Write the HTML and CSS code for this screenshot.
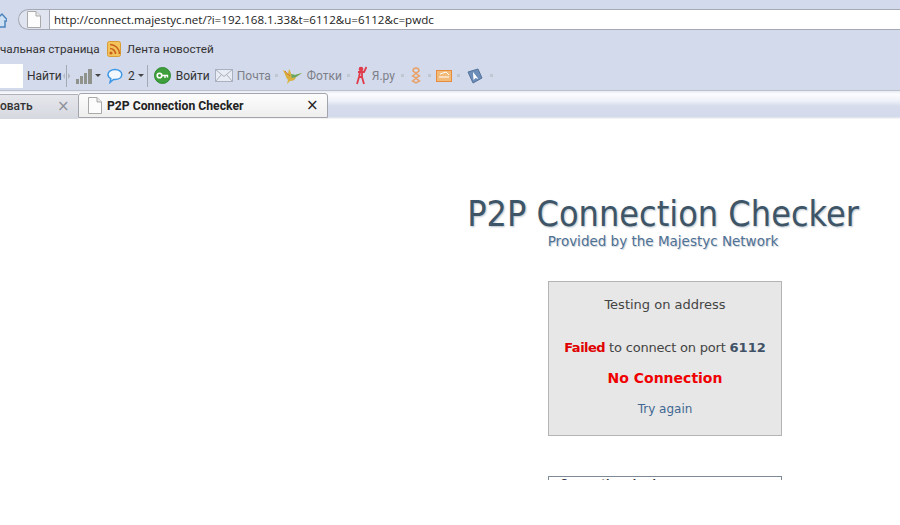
FILE: index.html
```html
<!DOCTYPE html>
<html lang="ru">
<head>
<meta charset="utf-8">
<title>P2P Connection Checker</title>
<link rel="stylesheet" href="styles.css">
</head>
<body>
<header class="chrome">
  <div class="addr-row">
    <svg class="home" width="7" height="16" viewBox="0 0 7 16"><path d="M-4 8 2 2l5 5.500V9H5v6H-2V9" fill="#cfe0f2" stroke="#4a84bd" stroke-width="1.500"/></svg>
    <div class="addr-pill">
      <svg width="14" height="17" viewBox="0 0 14 17"><path d="M.5.500h8.500l4.500 4.500v11.500H.5z" fill="#fcfcfc" stroke="#a9a9a9"/><path d="M9 .5v4.500h4.500" fill="#e8e8e8" stroke="#a9a9a9"/></svg>
    </div>
    <div class="addr-field">http://connect.majestyc.net/?i=192.168.1.33&amp;t=6112&amp;u=6112&amp;c=pwdc</div>
  </div>
  <div class="links-row">
    <span>чальная страница</span>
    <svg class="rss" width="14" height="16" viewBox="0 0 14 16"><rect x=".5" y=".5" width="13" height="15" rx="2" fill="#f3c35c" stroke="#d99b33"/><circle cx="4" cy="12" r="1.600" fill="#c8621c"/><path d="M3 7.500a5.500 5.500 0 0 1 5.500 5.500M3 3.500a9.500 9.500 0 0 1 9.500 9.500" fill="none" stroke="#c8621c" stroke-width="1.600"/></svg>
    <span>Лента новостей</span>
  </div>
  <div class="tools-row">
    <div class="search-box"></div>
    <span class="tool-text find">Найти</span>
    <svg class="grip" width="10" height="22" viewBox="0 0 10 22"><path d="M3.500 0v22" stroke="#a4a9b4"/><path d="M2 8 0 11l2 3zM5 8l2.500 3L5 14z" fill="#b5b9c2"/></svg>
    <svg class="signal" width="17" height="17" viewBox="0 0 17 17"><path d="M0 12h3v5H0zM4 9h3v8H4zM8 6h3v11H8zM12 2h4v15h-4z" fill="#8f938c"/></svg>
    <i class="arrow a-signal"></i>
    <svg class="bubble" width="16" height="16" viewBox="0 0 16 16"><path d="M8 1.500c3.600 0 6.800 2 6.800 5 0 3.100-3.200 5-6.800 5H6.500L3 14.500l.8-3.900C2 9.700 1 8.200 1 6.500c0-3 3.400-5 7-5z" fill="#f2f8fe" stroke="#3e97e4" stroke-width="1.500"/></svg>
    <span class="tool-text count">2</span>
    <i class="arrow a-count"></i>
    <div class="divider"></div>
    <svg class="key" width="17" height="17" viewBox="0 0 17 17"><circle cx="8.500" cy="8.500" r="8" fill="#3f9f3c" stroke="#2f8a32"/><circle cx="5.500" cy="8.500" r="2.300" fill="none" stroke="#fff" stroke-width="1.600"/><path d="M8 8.500h6M11 8.500v2.500M13.500 8.500v2" stroke="#fff" stroke-width="1.400"/></svg>
    <span class="tool-text login">Войти</span>
    <svg class="mail" width="18" height="13" viewBox="0 0 18 13"><rect x=".5" y=".5" width="17" height="12" fill="#e8ecf4" stroke="#aab0bd"/><path d="m1 1 8 6.500L17 1M1 12l5.500-6.500M17 12l-5.500-6.500" fill="none" stroke="#aab0bd"/></svg>
    <span class="tool-text muted mail-text">Почта</span>
    <i class="dot d-mail"></i>
    <svg class="bird" width="19" height="16" viewBox="0 0 19 16"><path d="M0 2c2 1 4 2 5 4l1-5c1 2 2 3 2 5l4 1 7-2-6 4c-1 3-3 4-6 4l-3 3 1-4C3 10 2 6 0 2z" fill="#d8b13e"/><path d="m8 6 4 1 7-2-6 4-4 1z" fill="#63a86a"/><path d="M2 3c2 2 3 4 5 5" stroke="#d8743a" fill="none"/></svg>
    <span class="tool-text muted photo-text">Фотки</span>
    <i class="dot d-photo"></i>
    <svg class="man" width="11" height="19" viewBox="0 0 11 19"><circle cx="5" cy="3" r="2.300" fill="#df3b4b"/><path d="M2 6h6l2.500-5M4 6 3 11l-2 7M6 6v5l2 7M3 11h3" fill="none" stroke="#df3b4b" stroke-width="1.800"/></svg>
    <span class="tool-text muted ya-text">Я.ру</span>
    <i class="dot d-ya"></i>
    <svg class="stack" width="10" height="17" viewBox="0 0 10 17"><g fill="none" stroke="#e9a167" stroke-width="1.500"><path d="M2 4c0-4 6-4 6 0l-3 2zM1.500 9 5 6.500 8.500 9 5 11zM1.500 14 5 11.500 8.500 14 5 16z"/></g></svg>
    <i class="dot d-stack"></i>
    <svg class="folder" width="16" height="13" viewBox="0 0 16 13"><rect x=".5" y="1.500" width="15" height="11" fill="#f3bb7a" stroke="#e58c3d"/><path d="M3 8h10M4 5l6-2 3 3" fill="none" stroke="#fff"/></svg>
    <i class="dot d-folder"></i>
    <svg class="cursor" width="16" height="16" viewBox="0 0 16 16"><path d="M1 4 11 1l4 9-9 5z" fill="#6c8db8" stroke="#54739c"/><path d="m6 4 .5 8 2-2 3 1z" fill="#fff"/></svg>
    <i class="dot d-cursor"></i>
  </div>
  <div class="tabs-row">
    <div class="tab back">
      <span class="tab-name">овать</span>
      <span class="close close-back">×</span>
    </div>
    <div class="tab active">
      <svg class="tab-icon" width="14" height="17" viewBox="0 0 14 17"><path d="M.5.500h8.500l4.500 4.500v11.500H.5z" fill="#fcfcfc" stroke="#a9a9a9"/><path d="M9 .5v4.500h4.500" fill="#e8e8e8" stroke="#a9a9a9"/></svg>
      <span class="tab-title">P2P Connection Checker</span>
      <span class="close">×</span>
    </div>
  </div>
</header>
<main class="page">
  <div class="column">
    <h1 class="title">P2P Connection Checker</h1>
    <h2 class="subtitle">Provided by the Majestyc Network</h2>
    <section class="result">
      <p class="testing">Testing on address</p>
      <p class="status"><b class="fail">Failed</b> to connect on port <b class="port">6112</b></p>
      <p class="none">No Connection</p>
      <a class="retry" href="#">Try again</a>
    </section>
    <section class="next">
      <p class="next-text">Connection check</p>
    </section>
  </div>
</main>
</body>
</html>
```
FILE: styles.css
```css
* { box-sizing: border-box; }
html, body { margin: 0; padding: 0; height: 100%; background: #fff; overflow: hidden; }
body { font-family: "DejaVu Sans", sans-serif; }

.chrome {
  height: 119px;
  background: #d3daec;
  font-family: Roboto, sans-serif;
  font-size: 12px;
  color: #222;
  overflow: hidden;
}

.addr-row { display: flex; align-items: center; height: 33px; padding-top: 6px; }
.home { flex: none; margin-right: 11px; }
.addr-pill {
  width: 31px; height: 21px; flex: none;
  display: flex; align-items: center; justify-content: flex-end; padding-right: 8px;
  border: 1px solid #a5a9b3; border-right: 0; border-radius: 11px 0 0 11px;
  background: #dfe4f0;
}
.addr-field {
  flex: 1; height: 21px; line-height: 19px; padding-left: 4px;
  background: #fff; border: 1px solid #a5a9b3; border-right: 0;
  font-family: "Open Sans", sans-serif; font-size: 11.600px; color: #222;
}

.links-row { display: flex; align-items: center; height: 24px; margin-top: 4px; color: #333; font-size: 11.700px; }
.rss { margin: 0 6px 0 7px; }

.tools-row { display: flex; align-items: center; height: 25px; margin-top: 2px; color: #333; }
.search-box { width: 23px; height: 24px; background: #fff; flex: none; }
.tool-text { line-height: 1; }
.muted { color: #7d8088; }
.find { margin-left: 4px; width: 35px; }
.grip { margin-left: 1px; }
.signal { margin-left: 3px; }
.arrow { width: 0; height: 0; border: 3px solid transparent; border-top-color: #444; border-bottom: 0; }
.a-signal { margin-left: 2px; }
.bubble { margin-left: 6px; }
.count { margin-left: 5px; }
.a-count { margin-left: 3px; }
.divider { width: 1px; height: 22px; background: #a4a9b4; margin-left: 3px; }
.key { margin-left: 6px; }
.login { margin-left: 5px; width: 34px; }
.mail { margin-left: 5px; }
.mail-text { margin-left: 4px; width: 35px; }
.dot { width: 3px; height: 3px; background: #c1c6d1; flex: none; }
.d-mail { margin-left: 3px; }
.bird { margin-left: 5px; }
.photo-text { margin-left: 5px; width: 35px; }
.d-photo { margin-left: 5px; }
.man { margin-left: 6px; }
.ya-text { margin-left: 5px; width: 24px; }
.d-ya { margin-left: 5px; }
.stack { margin-left: 7px; }
.d-stack { margin-left: 7px; }
.folder { margin-left: 5px; }
.d-folder { margin-left: 5px; }
.cursor { margin-left: 7px; }
.d-cursor { margin-left: 7px; }

.tabs-row {
  display: flex; align-items: flex-start; height: 30px; margin-top: 2px;
  background: linear-gradient(#e6eaf4 0, #fbfcfe 3px, #eef1f8 10px, #d6dcec 15px, #d3daec 26px, #f2f2f2 27px);
  border-top: 1px solid #bcc0ca;
  border-bottom: 1px solid #a0a0a0;
}
.tab { display: flex; align-items: center; height: 25px; flex: none; }
.back {
  width: 78px; margin-top: 3px; padding-bottom: 2px;
  background: linear-gradient(#e6e7ec, #d6d8e0);
  border-top: 1px solid #aeb0b8;
}
.tab-name { font-weight: 500; color: #333; width: 31px; }
.close { font-family: "DejaVu Sans", sans-serif; font-size: 15px; line-height: 1; color: #222; }
.close-back { margin-left: 26px; color: #8d9099; }
.active {
  width: 250px; margin-top: 2px; padding-left: 9px;
  background: linear-gradient(#fdfdfd, #eeeeee);
  border: 1px solid #a3a5ad; border-radius: 3px 3px 0 0;
}
.tab-title { margin-left: 5px; font-size: 12.200px; font-weight: 700; color: #222; width: 199px; white-space: nowrap; }

.page { height: 361px; overflow: hidden; display: flex; }
.column { width: 392px; margin-left: 467px; flex: none; display: flex; flex-direction: column; align-items: center; }
.title {
  margin: 76px 0 0; font-family: "DejaVu Sans Condensed", "DejaVu Sans", sans-serif; font-stretch: condensed;
  font-size: 35.700px; line-height: 38px; font-weight: 400; white-space: nowrap; flex: none;
  color: #3e5568; text-shadow: 1px 1px 2px #b9c4cc;
}
.subtitle {
  margin: 0; font-size: 13.500px; line-height: 17px; font-weight: 400; white-space: nowrap; flex: none;
  color: #4f7195; text-shadow: 1px 1px 1px #c8d0d8;
}
.result {
  width: 234px; height: 155px; margin: 31px 0 0 4px; padding-top: 15px; flex: none;
  background: #e7e7e7; border: 1px solid #b4b4b4; text-align: center;
  font-size: 13px; color: #444; display: flex; flex-direction: column; align-items: center;
}
.result p { margin: 0; }
.testing { line-height: 16px; }
.result .status { margin-top: 27px; line-height: 16px; letter-spacing: -0.200px; }
.fail { color: #e00000; letter-spacing: -0.500px; }
.port { color: #3f5266; letter-spacing: 0; }
.result .none { margin-top: 13px; line-height: 18px; font-size: 14px; font-weight: 700; color: #f00000; }
.retry { margin-top: 14px; line-height: 16px; font-size: 12px; color: #3f6792; text-decoration: none; }
.next {
  width: 234px; height: 60px; margin: 40px 0 0 4px; flex: none; padding-left: 11px;
  border: 1px solid #7d8a96; border-bottom: 0;
  font-size: 10px; font-weight: 700; color: #334;
}
.next-text { margin: 0; line-height: 14px; }
```
